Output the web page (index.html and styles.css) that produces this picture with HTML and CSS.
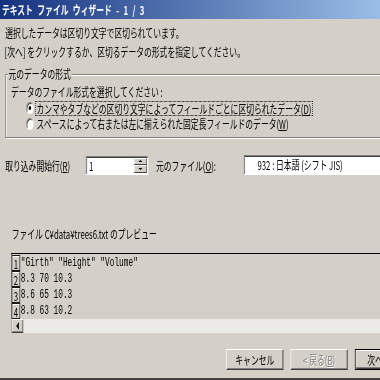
FILE: index.html
```html
<!DOCTYPE html>
<html lang="ja">
<head>
<meta charset="utf-8">
<title>テキスト ファイル ウィザード - 1 / 3</title>
<link rel="stylesheet" href="styles.css">
</head>
<body>
<div class="dlg">
  <div class="titlebar">テキスト ファイル ウィザード - 1 / 3</div>
  <div class="content">
    <p class="line l1">選択したデータは区切り文字で区切られています。</p>
    <p class="line l2">[次へ] をクリックするか、区切るデータの形式を指定してください。</p>
    <div class="group">
      <div class="group-label">元のデータの形式</div>
      <div class="prompt">データのファイル形式を選択してください :</div>
      <div class="radio"><span class="dot on"></span><span class="focus">カンマやタブなどの区切り文字によってフィールドごとに区切られたデータ(<u>D</u>)</span></div>
      <div class="radio"><span class="dot"></span><span class="rtext">スペースによって右または左に揃えられた固定長フィールドのデータ(<u>W</u>)</span></div>
    </div>
    <div class="startrow">
      <span class="lbl-start">取り込み開始行(<u>R</u>)</span>
      <div class="spin">
        <span class="val">1</span>
        <div class="arrows"><span class="sbtn up"></span><span class="sbtn down"></span></div>
      </div>
      <span class="lbl-orig">元のファイル(<u>O</u>):</span>
      <div class="combo">932 : 日本語 (シフト JIS)</div>
    </div>
    <div class="pvlabel">ファイル C¥data¥trees6.txt のプレビュー</div>
    <div class="preview">
      <div class="row"><span class="rn">1</span><span class="txt">"Girth" "Height" "Volume"</span></div>
      <div class="row"><span class="rn">2</span><span class="txt">8.3 70 10.3</span></div>
      <div class="row"><span class="rn">3</span><span class="txt">8.6 65 10.3</span></div>
      <div class="row"><span class="rn">4</span><span class="txt">8.8 63 10.2</span></div>
      <div class="hscroll"><span class="sb-arrow"></span><span class="sb-track"></span></div>
    </div>
    <div class="buttons">
      <button class="btn">キャンセル</button>
      <button class="btn disabled">&lt; 戻る(<u>B</u>)</button>
      <button class="btn default">次へ(<u>N</u>) &gt;</button>
    </div>
  </div>
  <div class="frame-bottom"></div>
</div>
</body>
</html>
```

FILE: styles.css
```css
html, body {
  margin: 0;
  padding: 0;
  width: 380px;
  height: 380px;
  overflow: hidden;
  background: #d4d0c8;
}

.dlg {
  width: 640px;
  height: 380px;
  transform: scaleX(0.65);
  transform-origin: 0 0;
  font-family: "Noto Sans CJK JP", "Noto Sans", sans-serif;
  font-size: 12px;
  color: #000;
  background: #d4d0c8;
}

.titlebar {
  height: 19px;
  line-height: 20px;
  padding-left: 3px;
  color: #fff;
  font-weight: bold;
  word-spacing: 4px;
  white-space: nowrap;
  background: linear-gradient(to right, #14327f, #a6caf0);
}

.content {
  padding-left: 7px;
}

.line {
  margin: 0;
  line-height: 16px;
  white-space: nowrap;
}

.l1 {
  margin-top: 6px;
  padding-left: 1px;
}

.l2 {
  margin-top: 3px;
}

.group {
  margin: 14px 0 0 1px;
  padding: 0 0 5px 0;
  border: 1px solid #808080;
  box-shadow: inset 1px 1px 0 #fff, 1px 1px 0 #fff;
}

.group-label {
  width: fit-content;
  margin: -8px 0 0 3px;
  padding: 0 1px;
  line-height: 14px;
  background: #d4d0c8;
  white-space: nowrap;
}

.prompt {
  margin: 3px 0 0 8px;
  line-height: 16px;
  white-space: nowrap;
}

.radio {
  display: flex;
  align-items: center;
  height: 16px;
  margin-left: 31px;
  white-space: nowrap;
}

.dot {
  flex: none;
  display: flex;
  align-items: center;
  justify-content: center;
  width: 12px;
  height: 12px;
  box-sizing: border-box;
  margin-right: 3px;
  border-radius: 50%;
  background: #fff;
  border: 1px solid;
  border-color: #808080 #fff #fff #808080;
  box-shadow: inset 1px 1px 0 #404040;
}

.dot.on::after {
  content: "";
  width: 4px;
  height: 4px;
  border-radius: 50%;
  background: #000;
}

.focus {
  padding: 0 1px;
  line-height: 13px;
  outline: 1px dotted #000;
}

.rtext {
  padding: 0 1px;
  line-height: 14px;
}

.startrow {
  display: flex;
  align-items: center;
  height: 20px;
  margin: 17px 0 0 1px;
  white-space: nowrap;
}

.lbl-start {
  flex: none;
  width: 124px;
}

.spin {
  flex: none;
  display: flex;
  width: 96px;
  height: 19px;
  box-sizing: border-box;
  background: #fff;
  border: 1px solid;
  border-color: #808080 #fff #fff #808080;
  box-shadow: inset 1px 1px 0 #404040;
  padding: 1px;
}

.val {
  flex: 1;
  padding-left: 3px;
  line-height: 15px;
}

.arrows {
  flex: none;
  display: flex;
  flex-direction: column;
  width: 20px;
}

.sbtn {
  flex: 1;
  display: flex;
  align-items: center;
  justify-content: center;
  box-sizing: border-box;
  background: #d4d0c8;
  border: 1px solid;
  border-color: #fff #404040 #404040 #fff;
}

.sbtn.up::before {
  content: "";
  border-left: 3px solid transparent;
  border-right: 3px solid transparent;
  border-bottom: 2px solid #000;
}

.sbtn.down::before {
  content: "";
  border-left: 3px solid transparent;
  border-right: 3px solid transparent;
  border-top: 2px solid #000;
}

.lbl-orig {
  flex: none;
  width: 135px;
  margin-left: 12px;
}

.combo {
  flex: none;
  width: 300px;
  height: 20px;
  box-sizing: border-box;
  padding-left: 20px;
  line-height: 17px;
  background: #fff;
  border: 1px solid;
  border-color: #808080 #fff #fff #808080;
  box-shadow: inset 1px 1px 0 #404040;
}

.pvlabel {
  margin: 51px 0 0 11px;
  line-height: 16px;
  white-space: nowrap;
}

.preview {
  margin: 11px 0 0 10px;
  padding-top: 1px;
  border-top: 1px solid #000;
  border-left: 1px solid #404040;
}

.row {
  display: flex;
  height: 16px;
}

.rn {
  flex: none;
  width: 13px;
  box-sizing: border-box;
  border: 1px solid #1a1a1a;
  background: #d4d0c8;
  box-shadow: inset 1px 1px 0 #fff;
  text-align: center;
  line-height: 15px;
  font-size: 12px;
}

.txt {
  padding-left: 1px;
  font-family: "Liberation Mono", "DejaVu Sans Mono", monospace;
  font-size: 12px;
  line-height: 16px;
  white-space: pre;
}

.hscroll {
  display: flex;
  height: 14px;
}

.sb-arrow {
  flex: none;
  display: flex;
  align-items: center;
  justify-content: center;
  width: 18px;
  box-sizing: border-box;
  background: #d4d0c8;
  border: 1px solid;
  border-color: #fff #404040 #404040 #fff;
  box-shadow: inset -1px -1px 0 #808080;
}

.sb-arrow::before {
  content: "";
  border-top: 4px solid transparent;
  border-bottom: 4px solid transparent;
  border-right: 4px solid #000;
}

.sb-track {
  flex: 1;
  background: #ebeae7;
}

.buttons {
  display: flex;
  gap: 11px;
  margin: 16px 0 0 341px;
}

.btn {
  flex: none;
  display: flex;
  align-items: center;
  justify-content: center;
  width: 88px;
  height: 21px;
  box-sizing: border-box;
  padding: 0;
  font: inherit;
  line-height: 14px;
  color: #000;
  white-space: nowrap;
  background: #d4d0c8;
  border: 1px solid;
  border-color: #fff #404040 #404040 #fff;
  box-shadow: inset -1px -1px 0 #808080;
}

.btn.disabled {
  color: #808080;
  text-shadow: 1px 1px 0 #fff;
}

.btn.default {
  border-color: #000;
  box-shadow: inset 1px 1px 0 #fff, inset -1px -1px 0 #404040, inset -2px -2px 0 #808080;
}

.frame-bottom {
  height: 2px;
  margin-top: 8px;
  background: #404040;
}
```
